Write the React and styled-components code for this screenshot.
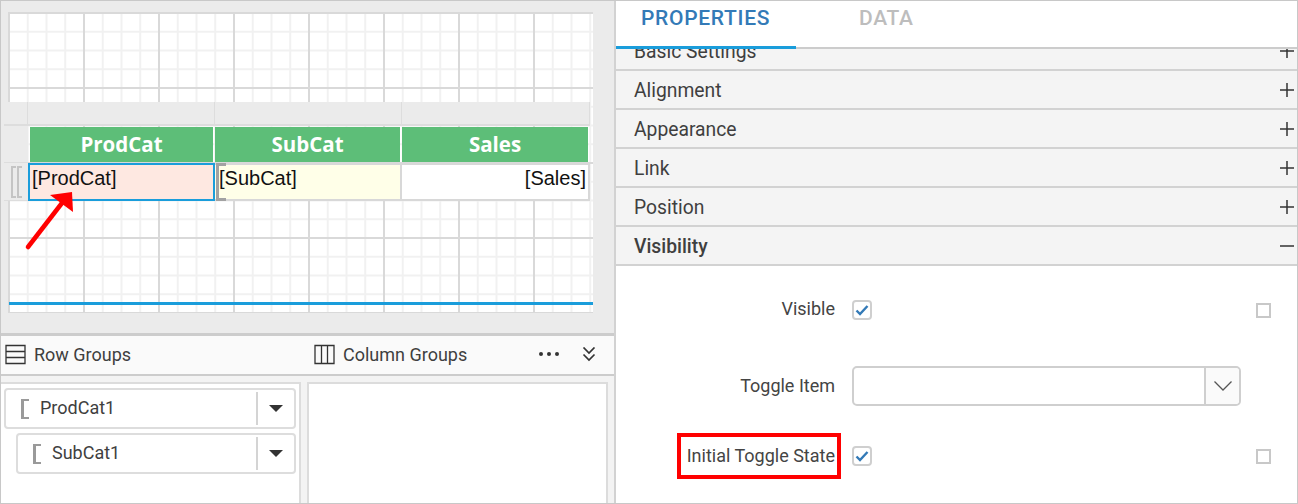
import styled, { createGlobalStyle } from 'styled-components';

const GlobalStyle = createGlobalStyle`
    html, body {
        margin: 0;
        padding: 0;
        background: #fff;
    }
    * {
        box-sizing: border-box;
    }
`;

const Frame = styled.div`
    position: relative;
    width: 1298px;
    height: 504px;
`;

const Page = styled.div`
    display: flex;
    width: 1298px;
    height: 504px;
    overflow: hidden;
    border: 1px solid #c8c8c8;
    font-family: Roboto, "Liberation Sans", sans-serif;
    color: #3f3f3f;
`;

const LeftPane = styled.div`
    display: flex;
    flex-direction: column;
    width: 615px;
    border-right: 2px solid #d2d2d2;
`;

const Designer = styled.div`
    height: 332px;
    padding: 11px 20px 0 7px;
    background: #ebebeb;
`;

const Canvas = styled.div`
    position: relative;
    width: 585px;
    height: 301px;
    padding-top: 90px;
    background-color: #fff;
    background-image:
        linear-gradient(to right, #d9d9d9 2px, transparent 2px),
        linear-gradient(to bottom, #d9d9d9 2px, transparent 2px),
        linear-gradient(to right, #f1f1f1 2px, transparent 2px),
        linear-gradient(to bottom, #f1f1f1 2px, transparent 2px);
    background-size: 75px 75px, 75px 75px, 18.75px 18.75px, 18.75px 18.75px;
`;

const ReportTable = styled.div`
    display: grid;
    grid-template-columns: 24px 187px 187px 188px;
    grid-template-rows: 24px 37px 38px;
    width: 586px;
    margin-left: -4px;
`;

const ColumnHandle = styled.div`
    background: #ebebeb;
    border-right: 1px solid #dddddd;
    border-bottom: 2px solid #dddddd;
`;

const RowHandle = styled.div`
    display: flex;
    align-items: center;
    justify-content: center;
    gap: 1px;
    background: #ebebeb;
    border-bottom: 1px solid #dddddd;
`;

const HandleBracket = styled.span`
    width: 5px;
    height: 32px;
    border: 2px solid #c4c4c4;
    border-right: none;
`;

const HeaderCell = styled.div`
    display: flex;
    align-items: center;
    justify-content: center;
    margin: 1px 2px 1px 0;
    margin-left: ${props => (props.$first ? '2px' : '0')};
    padding-bottom: 2px;
    background: #5dbe78;
    color: #fff;
    font-family: "Open Sans", sans-serif;
    font-size: 20.5px;
    font-weight: 700;
`;

const DataCell = styled.div`
    position: relative;
    padding: 1px 2px 1px 2px;
    background: ${props => props.$bg};
    border: 2px solid ${props => (props.$selected ? '#1a9ddb' : '#d8d8d8')};
    border-left-width: ${props => (props.$selected ? '2px' : '0')};
    text-align: ${props => props.$align || 'left'};
    color: #111;
    font-family: "Liberation Sans", Arial, sans-serif;
    font-size: 20px;
    line-height: 24px;
`;

const SubCatCell = styled(DataCell)`
    padding-left: 4px;
`;

const CellMark = styled.span`
    position: absolute;
    top: -2px;
    bottom: -2px;
    left: 1px;
    width: 10px;
    border: 3px solid #a2a2a2;
    border-right: none;
`;

const BottomLine = styled.div`
    position: absolute;
    left: 1px;
    right: 0;
    top: 290px;
    height: 3px;
    background: #1a9ddb;
`;

const Arrow = styled.svg`
    position: absolute;
    left: 16px;
    top: 177px;
`;

const GroupBar = styled.div`
    display: flex;
    align-items: center;
    height: 43px;
    padding: 0 0 2px 4px;
    background: #fafafa;
    border-top: 3px solid #cccccc;
    border-bottom: 2px solid #cccccc;
    font-size: 18px;
`;

const BarTitle = styled.div`
    display: flex;
    align-items: center;
    gap: 8px;
    width: ${props => props.$width}px;
`;

const BarActions = styled.div`
    display: flex;
    align-items: center;
    gap: 22px;
`;

const GroupBody = styled.div`
    flex: 1;
    display: flex;
    gap: 6px;
    padding: 6px 6px 0 0;
    background: #f3f3f3;
`;

const GroupPanel = styled.div`
    flex: ${props => (props.$fixed ? '0 0 300px' : '1')};
    display: flex;
    flex-direction: column;
    gap: 4px;
    padding: 4px 3px 0;
    background: #fff;
    border-top: 2px solid #dcdcdc;
    border-right: 2px solid #dcdcdc;
    border-left: ${props => (props.$fixed ? 'none' : '2px solid #dcdcdc')};
`;

const GroupRow = styled.div`
    display: flex;
    align-items: center;
    height: 41px;
    margin-left: ${props => props.$indent}px;
    padding-left: 15px;
    border: 2px solid #dddddd;
    border-radius: 4px;
    font-size: 18px;
`;

const GroupBracket = styled.span`
    width: 8px;
    height: 20px;
    margin-right: 11px;
    border: 2px solid #9a9a9a;
    border-right: none;
    box-shadow: inset 1px 0 0 #9a9a9a;
`;

const GroupName = styled.span`
    flex: 1;
    margin-top: -2px;
`;

const GroupToggle = styled.div`
    display: flex;
    align-items: center;
    justify-content: center;
    width: 38px;
    height: 33px;
    border-left: 2px solid #d4d4d4;
`;

const Caret = styled.span`
    width: 0;
    height: 0;
    border-left: 7px solid transparent;
    border-right: 7px solid transparent;
    border-top: 7px solid #333;
`;

const RightPane = styled.div`
    flex: 1;
    display: flex;
    flex-direction: column;
    min-width: 0;
`;

const Tabs = styled.div`
    display: flex;
    height: 48px;
    background: #fff;
    border-bottom: 2px solid #cccccc;
`;

const Tab = styled.div`
    width: ${props => props.$width}px;
    height: ${props => (props.$active ? '48px' : 'auto')};
    padding: 4px 0 0 ${props => props.$pad}px;
    font-size: 21px;
    font-weight: 500;
    letter-spacing: 0.7px;
    line-height: 26px;
    color: ${props => (props.$active ? '#337ab7' : '#bdbdbd')};
    border-bottom: ${props => (props.$active ? '3px solid #1a9ddb' : 'none')};
`;

const Accordion = styled.div`
    height: 217px;
    overflow: hidden;
`;

const Section = styled.div`
    display: flex;
    align-items: center;
    justify-content: space-between;
    height: 39px;
    margin-top: ${props => (props.$scrolled ? '-17px' : '0')};
    padding: 2px 3px 0 18px;
    background: #f4f4f4;
    border-bottom: 2px solid #d2d2d2;
    font-size: 19.3px;
    font-weight: ${props => (props.$open ? 500 : 400)};
`;

const SectionIcon = styled.svg`
    margin-top: -2px;
`;

const Form = styled.div`
    padding-top: 24px;
`;

const FormRow = styled.div`
    display: flex;
    align-items: center;
    height: 40px;
    margin-bottom: ${props => props.$after || 0}px;
    padding-right: 26px;
`;

const Label = styled.div`
    flex: 0 0 219px;
    margin-top: ${props => props.$lift || -2}px;
    text-align: right;
    font-size: 18px;
    color: #444;
    white-space: nowrap;
`;

const Check = styled.span`
    display: flex;
    align-items: center;
    justify-content: center;
    width: 20px;
    height: 20px;
    margin-left: 17px;
    border: 2px solid #cfcfcf;
    border-radius: 4px;
`;

const EmptyBox = styled.span`
    width: 15px;
    height: 15px;
    margin-left: auto;
    border: 2px solid #c8c8c8;
`;

const ComboBox = styled.div`
    display: flex;
    justify-content: flex-end;
    width: 389px;
    height: 40px;
    margin-left: 17px;
    border: 2px solid #cfcfcf;
    border-radius: 5px;
`;

const ComboButton = styled.div`
    display: flex;
    align-items: center;
    justify-content: center;
    width: 35px;
    background: #fafafa;
    border-left: 2px solid #cfcfcf;
    border-radius: 0 4px 4px 0;
`;

const RedBox = styled.div`
    position: absolute;
    left: 677px;
    top: 433px;
    width: 164px;
    height: 46px;
    border: 4px solid #ff0000;
`;

const CheckMark = () => (
    <svg width="14" height="12" viewBox="0 0 14 12">
        <path d="M1.5 6.5 L5 10 L12.5 2" fill="none" stroke="#337ab7" strokeWidth="2.4" />
    </svg>
);

const RowsIcon = () => (
    <svg width="21" height="21" viewBox="0 0 21 21">
        <path d="M1 1.5H20V19.5H1ZM1 7.5H20M1 13.5H20" fill="none" stroke="#333" strokeWidth="1.3" />
    </svg>
);

const ColumnsIcon = () => (
    <svg width="21" height="21" viewBox="0 0 21 21">
        <path d="M1 1.5H20V19.5H1ZM7.5 1.5V19.5M13.5 1.5V19.5" fill="none" stroke="#333" strokeWidth="1.3" />
    </svg>
);

const Dots = () => (
    <svg width="22" height="6" viewBox="0 0 22 6">
        <circle cx="3" cy="3" r="2" fill="#333" />
        <circle cx="11" cy="3" r="2" fill="#333" />
        <circle cx="19" cy="3" r="2" fill="#333" />
    </svg>
);

const DoubleChevron = () => (
    <svg width="14" height="15" viewBox="0 0 14 15">
        <path d="M1.5 0.5 L7 6 L12.5 0.5 M1.5 7.5 L7 13 L12.5 7.5" fill="none" stroke="#333" strokeWidth="1.7" />
    </svg>
);

const ComboChevron = () => (
    <svg width="18" height="10" viewBox="0 0 18 10">
        <path d="M0.5 0.5 L9 9 L17.5 0.5" fill="none" stroke="#555" strokeWidth="1.3" />
    </svg>
);

const PlusIcon = () => (
    <SectionIcon width="14" height="14" viewBox="0 0 14 14">
        <path d="M0 7H14M7 0V14" stroke="#333" strokeWidth="1.5" />
    </SectionIcon>
);

const MinusIcon = () => (
    <SectionIcon width="14" height="14" viewBox="0 0 14 14">
        <path d="M0 7H14" stroke="#333" strokeWidth="1.5" />
    </SectionIcon>
);

const sections = ['Basic Settings', 'Alignment', 'Appearance', 'Link', 'Position'];

const App = () => (
    <Frame>
        <GlobalStyle />
        <Page>
            <LeftPane>
                <Designer>
                    <Canvas>
                        <ReportTable>
                            <ColumnHandle />
                            <ColumnHandle />
                            <ColumnHandle />
                            <ColumnHandle />
                            <RowHandle />
                            <HeaderCell $first>ProdCat</HeaderCell>
                            <HeaderCell>SubCat</HeaderCell>
                            <HeaderCell>Sales</HeaderCell>
                            <RowHandle>
                                <HandleBracket />
                                <HandleBracket />
                            </RowHandle>
                            <DataCell $bg="#fee8e1" $selected>[ProdCat]</DataCell>
                            <SubCatCell $bg="#ffffe8">
                                <CellMark />
                                [SubCat]
                            </SubCatCell>
                            <DataCell $bg="#fff" $align="right">[Sales]</DataCell>
                        </ReportTable>
                        <BottomLine />
                        <Arrow width="60" height="80" viewBox="0 0 60 80">
                            <path d="M4 58 L38 14" stroke="#ff0000" strokeWidth="4.5" strokeLinecap="round" />
                            <path d="M48 3 L26 6 L49 23 Z" fill="#ff0000" />
                        </Arrow>
                    </Canvas>
                </Designer>
                <GroupBar>
                    <BarTitle $width={309}>
                        <RowsIcon />
                        Row Groups
                    </BarTitle>
                    <BarTitle $width={224}>
                        <ColumnsIcon />
                        Column Groups
                    </BarTitle>
                    <BarActions>
                        <Dots />
                        <DoubleChevron />
                    </BarActions>
                </GroupBar>
                <GroupBody>
                    <GroupPanel $fixed>
                        <GroupRow $indent={0}>
                            <GroupBracket />
                            <GroupName>ProdCat1</GroupName>
                            <GroupToggle><Caret /></GroupToggle>
                        </GroupRow>
                        <GroupRow $indent={12}>
                            <GroupBracket />
                            <GroupName>SubCat1</GroupName>
                            <GroupToggle><Caret /></GroupToggle>
                        </GroupRow>
                    </GroupPanel>
                    <GroupPanel />
                </GroupBody>
            </LeftPane>
            <RightPane>
                <Tabs>
                    <Tab $active $width={180} $pad={25}>PROPERTIES</Tab>
                    <Tab $width={200} $pad={63}>DATA</Tab>
                </Tabs>
                <Accordion>
                    {sections.map((title, i) => (
                        <Section key={title} $scrolled={i === 0}>
                            {title}
                            <PlusIcon />
                        </Section>
                    ))}
                    <Section $open>
                        Visibility
                        <MinusIcon />
                    </Section>
                </Accordion>
                <Form>
                    <FormRow $after={36}>
                        <Label $lift={-4}>Visible</Label>
                        <Check><CheckMark /></Check>
                        <EmptyBox />
                    </FormRow>
                    <FormRow $after={30}>
                        <Label>Toggle Item</Label>
                        <ComboBox>
                            <ComboButton><ComboChevron /></ComboButton>
                        </ComboBox>
                    </FormRow>
                    <FormRow>
                        <Label>Initial Toggle State</Label>
                        <Check><CheckMark /></Check>
                        <EmptyBox />
                    </FormRow>
                </Form>
            </RightPane>
        </Page>
        <RedBox />
    </Frame>
);

export default App;
